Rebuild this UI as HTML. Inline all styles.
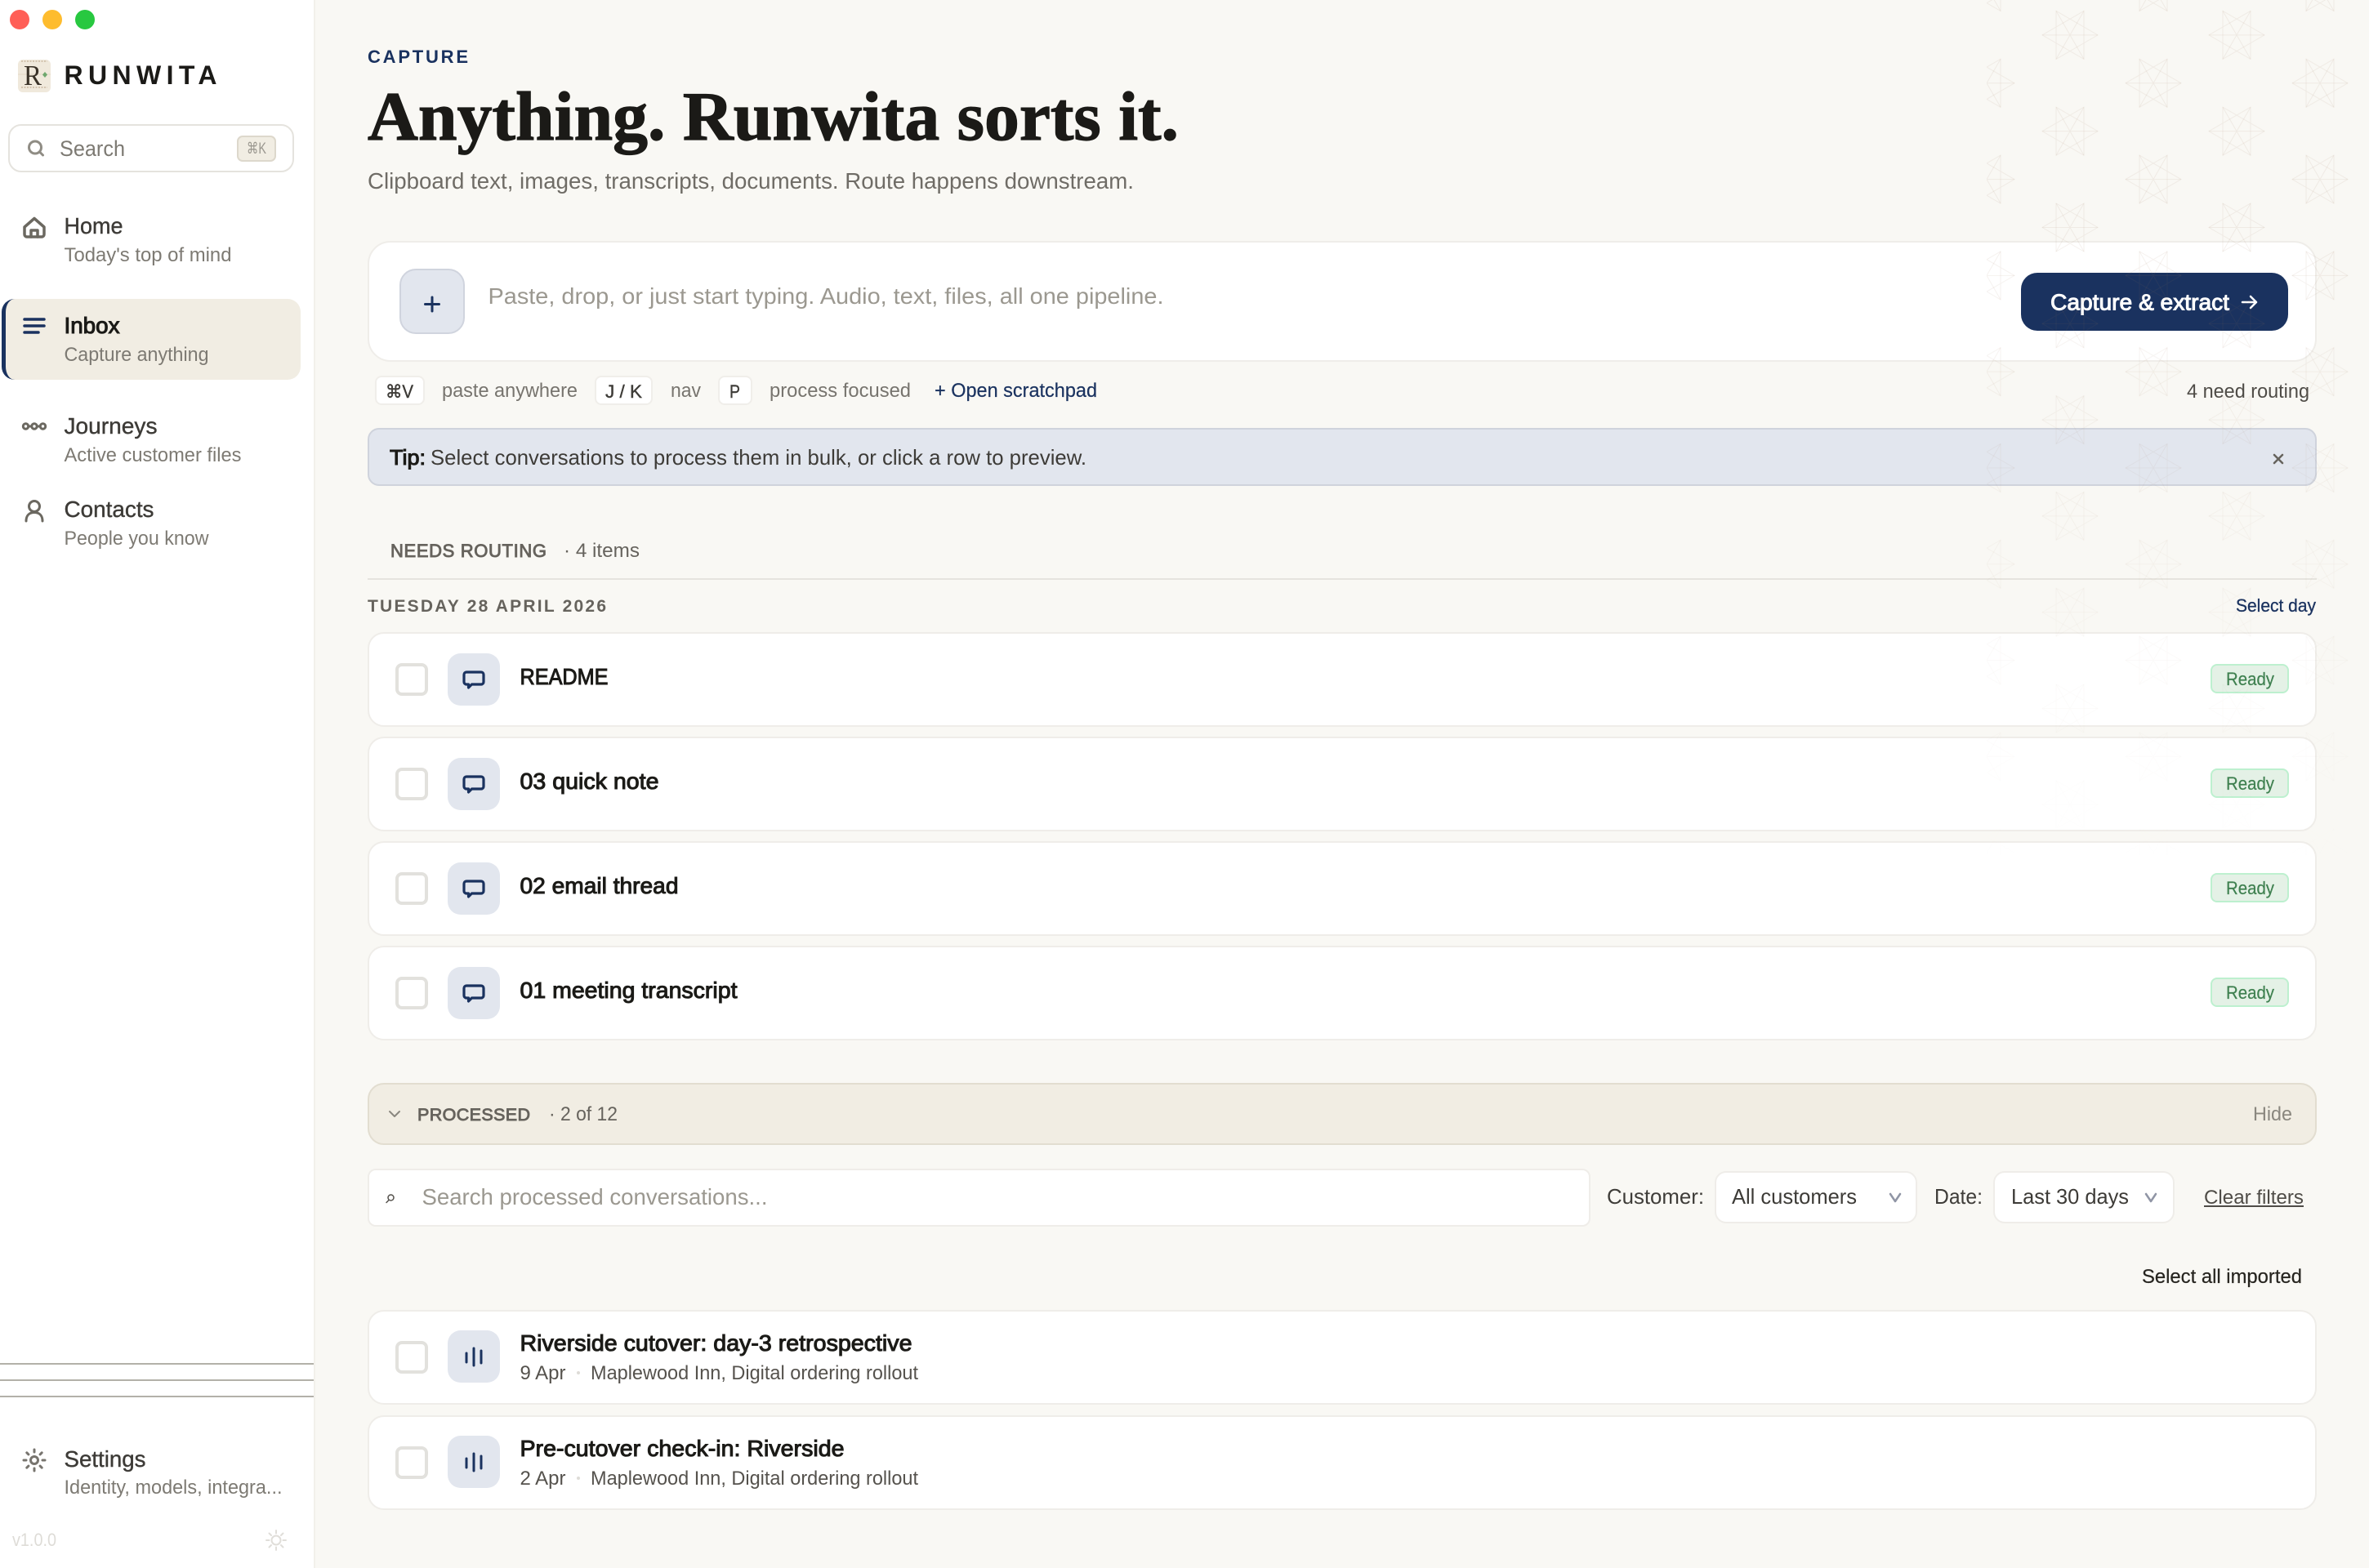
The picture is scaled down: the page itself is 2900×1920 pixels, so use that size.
<!DOCTYPE html>
<html lang="en">
<head>
<meta charset="utf-8">
<title>Runwita</title>
<style>
html,body{margin:0;padding:0;width:2900px;height:1920px;overflow:hidden;background:#f9f8f4}
body{position:relative;font-family:"Liberation Sans",sans-serif}
.b{position:absolute;box-sizing:border-box}
.card{background:#fff;border:2px solid #efede9}
.row{left:450px;width:2386px;height:116px;border-radius:20px}
.cb{left:484px;width:40px;height:40px;border:4px solid #e2e1dd;border-radius:8px;background:#fff}
.ic{left:548px;width:64px;height:64px;border-radius:16px;background:#e2e6ee}
.ready{left:2706px;width:96px;height:36px;background:#e4f1e6;border:2px solid #bdf0cf;border-radius:8px}
.kbd{top:460px;height:36px;background:#fff;border:2px solid #f0eeea;border-radius:8px}
.sel{top:1434px;height:64px;background:#fff;border:2px solid #efede9;border-radius:14px}
.sl{left:0;width:384px;height:2px;background:#b3b1a9}
svg{position:absolute;left:0;top:0}
text{font-family:"Liberation Sans","DejaVu Sans",sans-serif;white-space:pre}
.m{stroke:currentColor;stroke-width:.4}
.sb{font-weight:700}
.t1{fill:#1b1a17;stroke:#1b1a17;stroke-width:1.050}
.cap{fill:#66635d;stroke:#66635d;stroke-width:.9}
.i{fill:none;stroke-linecap:round;stroke-linejoin:round}
</style>
</head>
<body>
<!-- Sidebar -->
<div class="b" style="left:0;top:0;width:386px;height:1920px;background:#fff;border-right:2px solid #f2f0eb"></div>
<div class="b" style="left:12px;top:12px;width:24px;height:24px;border-radius:50%;background:#ff5f57"></div>
<div class="b" style="left:52px;top:12px;width:24px;height:24px;border-radius:50%;background:#febc2e"></div>
<div class="b" style="left:92px;top:12px;width:24px;height:24px;border-radius:50%;background:#28c840"></div>
<div class="b" style="left:22px;top:73px;width:40px;height:40px;border-radius:6px;background:#f0e9dc"></div>
<div class="b" style="left:10px;top:152px;width:350px;height:59px;border-radius:16px;background:#fff;border:2px solid #e5e3de"></div>
<div class="b" style="left:290px;top:166px;width:48px;height:32px;border-radius:7px;background:#f1ede3;border:2px solid #ddd8cc"></div>
<div class="b" style="left:2px;top:366px;width:366px;height:99px;border-radius:16px;background:#f1ede3;border-left:5px solid #1a325f"></div>
<div class="b sl" style="top:1669px"></div>
<div class="b sl" style="top:1689px"></div>
<div class="b sl" style="top:1709px"></div>

<!-- Capture -->
<div class="b card" style="left:450px;top:295px;width:2386px;height:148px;border-radius:28px"></div>
<div class="b" style="left:489px;top:329px;width:80px;height:80px;border-radius:20px;background:#e2e6ee;border:2px solid #d0d4de"></div>
<div class="b" style="left:2474px;top:334px;width:327px;height:71px;border-radius:20px;background:#1a325f"></div>
<div class="b kbd" style="left:459px;width:61px"></div>
<div class="b kbd" style="left:728px;width:71px"></div>
<div class="b kbd" style="left:879px;width:42px"></div>
<div class="b" style="left:450px;top:524px;width:2386px;height:71px;border-radius:14px;background:#e2e6ee;border:2px solid #cfd3dc"></div>
<div class="b" style="left:450px;top:708px;width:2386px;height:2px;background:#e6e4de"></div>

<!-- Rows -->
<div class="b card row" style="top:774px"></div>
<div class="b card row" style="top:902px"></div>
<div class="b card row" style="top:1030px"></div>
<div class="b card row" style="top:1158px"></div>
<div class="b cb" style="top:812px"></div><div class="b cb" style="top:940px"></div><div class="b cb" style="top:1068px"></div><div class="b cb" style="top:1196px"></div>
<div class="b ic" style="top:800px"></div><div class="b ic" style="top:928px"></div><div class="b ic" style="top:1056px"></div><div class="b ic" style="top:1184px"></div>
<div class="b ready" style="top:813px"></div><div class="b ready" style="top:941px"></div><div class="b ready" style="top:1069px"></div><div class="b ready" style="top:1197px"></div>

<!-- Processed -->
<div class="b" style="left:450px;top:1326px;width:2386px;height:76px;border-radius:20px;background:#f1ede3;border:2px solid #e2ddd0"></div>
<div class="b card" style="left:450px;top:1431px;width:1497px;height:71px;border-radius:10px"></div>
<div class="b sel" style="left:2099px;width:248px"></div>
<div class="b sel" style="left:2440px;width:222px"></div>
<div class="b card row" style="top:1604px"></div>
<div class="b card row" style="top:1733px"></div>
<div class="b cb" style="top:1642px"></div><div class="b cb" style="top:1771px"></div>
<div class="b ic" style="top:1629px"></div><div class="b ic" style="top:1758px"></div>

<svg width="2900" height="1920" viewBox="0 0 2900 1920">
  <defs>
    <g id="chat"><path class="i" stroke="#1a325f" stroke-width="3.200" d="M571 0h18a3 3 0 0 1 3 3v9a3 3 0 0 1-3 3h-11.500l-4 4v-4h-2.500a3 3 0 0 1-3-3v-9a3 3 0 0 1 3-3z"/></g>
    <g id="bars" class="i" stroke="#1a325f" stroke-width="3"><path d="M571 6v11M580 0v21M589 3v15"/></g>
  </defs>

  <!-- Logo -->
  <path d="M26 75h32M26 107h32" stroke="#c9b8a0" stroke-width="1.500" stroke-dasharray="2 1.500"/>
  <path d="M22 91h40" stroke="#e4d9c6" stroke-width="1"/>
  <text x="29" y="104" font-size="35" textLength="22" lengthAdjust="spacingAndGlyphs" fill="#3a3228" style="font-family:'Liberation Serif',serif">R</text>
  <path d="M55 88l3 3.500-3 3.500-3-3.500z" fill="#6fa86f"/>
  <text x="78.500" y="103" font-size="32" class="sb" fill="#1b1a17" textLength="187" lengthAdjust="spacing">RUNWITA</text>

  <!-- Search -->
  <circle class="i" cx="43" cy="180.500" r="7.500" stroke="#8f8c84" stroke-width="3"/><path class="i" d="M48.500 186L52.500 190" stroke="#8f8c84" stroke-width="3"/>
  <text x="73" y="191" font-size="27" fill="#7d7a73" textLength="80" lengthAdjust="spacingAndGlyphs">Search</text>
  <text x="302" y="188" font-size="19" fill="#9a978f" textLength="24" lengthAdjust="spacingAndGlyphs">⌘K</text>

  <!-- Nav icons -->
  <g class="i" stroke="#6b6860" stroke-width="3.500">
    <path d="M30 278L42 267.500L54 278V287a3 3 0 0 1-3 3H33a3 3 0 0 1-3-3Z"/><path d="M38 290V282H46V290"/>
    <path d="M30 391H54M30 399H54M30 407H47" stroke="#1a325f"/>
    <g stroke-width="3"><circle cx="31.500" cy="522" r="3.200"/><circle cx="42" cy="522" r="3.200"/><circle cx="52.500" cy="522" r="3.200"/><path d="M35 522h3.500M45.500 522h3.500"/></g>
    <circle cx="42" cy="620" r="6.500" stroke-width="3"/><path stroke-width="3" d="M32 638c0-7 4-10.500 10-10.500s10 3.500 10 10.500"/>
    <circle cx="42" cy="1788" r="4.500" stroke-width="3" stroke="#77746e"/>
    <path stroke="#77746e" stroke-width="3" d="M42 1775v3M42 1798v3M29 1788h3M52 1788h3M32.800 1778.800l2.100 2.100M49.100 1795.100l2.100 2.100M51.200 1778.800l-2.100 2.100M34.900 1795.100l-2.100 2.100"/>
  </g>
  <g class="i" stroke="#e0ded9" stroke-width="2">
    <circle cx="338" cy="1886" r="5.500"/>
    <path d="M338 1874v3.500M338 1894.500v3.500M326 1886h3.500M346.500 1886h3.500M329.500 1877.500l2.500 2.500M344 1892l2.500 2.500M346.500 1877.500l-2.500 2.500M332 1892l-2.500 2.500"/>
  </g>

  <!-- Nav text -->
  <text x="78.500" y="286" font-size="28" class="m" color="#3d3b37" fill="#3d3b37" textLength="72" lengthAdjust="spacingAndGlyphs">Home</text>
  <text x="78.500" y="320" font-size="24" fill="#7d7a73" textLength="205" lengthAdjust="spacingAndGlyphs">Today's top of mind</text>
  <text x="78.500" y="408" font-size="28" class="t1" textLength="68" lengthAdjust="spacingAndGlyphs">Inbox</text>
  <text x="78.500" y="442" font-size="24" fill="#7d7a73" textLength="177" lengthAdjust="spacingAndGlyphs">Capture anything</text>
  <text x="78.500" y="531" font-size="28" class="m" color="#3d3b37" fill="#3d3b37" textLength="114" lengthAdjust="spacingAndGlyphs">Journeys</text>
  <text x="78.500" y="565" font-size="24" fill="#7d7a73" textLength="217" lengthAdjust="spacingAndGlyphs">Active customer files</text>
  <text x="78.500" y="633" font-size="28" class="m" color="#3d3b37" fill="#3d3b37" textLength="110" lengthAdjust="spacingAndGlyphs">Contacts</text>
  <text x="78.500" y="667" font-size="24" fill="#7d7a73" textLength="177" lengthAdjust="spacingAndGlyphs">People you know</text>
  <text x="78.500" y="1796" font-size="28" class="m" color="#3d3b37" fill="#3d3b37" textLength="100" lengthAdjust="spacingAndGlyphs">Settings</text>
  <text x="78.500" y="1829" font-size="24" fill="#7d7a73" textLength="267" lengthAdjust="spacingAndGlyphs">Identity, models, integra...</text>
  <text x="15" y="1893" font-size="22" fill="#dedcd7" textLength="54" lengthAdjust="spacingAndGlyphs">v1.0.0</text>

  <!-- Header -->
  <text x="450" y="77" font-size="22" class="sb" fill="#1a325f" textLength="123" lengthAdjust="spacing">CAPTURE</text>
  <text x="450" y="171" font-size="85" font-weight="700" fill="#1b1a17" stroke="#1b1a17" stroke-width="1.200" textLength="993" lengthAdjust="spacingAndGlyphs" style="font-family:'Liberation Serif',serif">Anything. Runwita sorts it.</text>
  <text x="450" y="231" font-size="28" fill="#6f6c66" textLength="938" lengthAdjust="spacingAndGlyphs">Clipboard text, images, transcripts, documents. Route happens downstream.</text>

  <!-- Capture card -->
  <path d="M529 364v17M520.500 372.500h17" stroke="#1a325f" stroke-width="3" stroke-linecap="round"/>
  <text x="597.500" y="372" font-size="28" fill="#9b9890" textLength="827" lengthAdjust="spacingAndGlyphs">Paste, drop, or just start typing. Audio, text, files, all one pipeline.</text>
  <text x="2510" y="379.500" font-size="28" fill="#fff" stroke="#fff" stroke-width="1" textLength="219" lengthAdjust="spacingAndGlyphs">Capture &amp; extract</text>
  <path class="i" d="M2745 370H2762M2755 363L2762 370L2755 377" stroke="#fff" stroke-width="2.500"/>

  <!-- Hints -->
  <text x="472" y="487" font-size="22" class="m" color="#3d3b37" fill="#3d3b37" textLength="34" lengthAdjust="spacingAndGlyphs">⌘V</text>
  <text x="541" y="486" font-size="24" fill="#77746e" textLength="166" lengthAdjust="spacingAndGlyphs">paste anywhere</text>
  <text x="741" y="487" font-size="22" class="m" color="#3d3b37" fill="#3d3b37" textLength="45" lengthAdjust="spacingAndGlyphs">J / K</text>
  <text x="821" y="486" font-size="24" fill="#77746e" textLength="37" lengthAdjust="spacingAndGlyphs">nav</text>
  <text x="893" y="487" font-size="22" class="m" color="#3d3b37" fill="#3d3b37" textLength="13" lengthAdjust="spacingAndGlyphs">P</text>
  <text x="942" y="486" font-size="24" fill="#77746e" textLength="173" lengthAdjust="spacingAndGlyphs">process focused</text>
  <text x="1144" y="486" font-size="24" class="m" style="stroke-width:.2" color="#1a325f" fill="#1a325f" textLength="199" lengthAdjust="spacingAndGlyphs">+ Open scratchpad</text>
  <text x="2677" y="487" font-size="24" fill="#4f4c47" textLength="150" lengthAdjust="spacingAndGlyphs">4 need routing</text>

  <!-- Tip -->
  <text x="477" y="569" font-size="26" class="t1" textLength="44" lengthAdjust="spacingAndGlyphs">Tip:</text>
  <text x="527" y="569" font-size="26" fill="#3d3b37" textLength="803" lengthAdjust="spacingAndGlyphs">Select conversations to process them in bulk, or click a row to preview.</text>
  <path class="i" d="M2784 557L2794 567M2794 557L2784 567" stroke="#66635d" stroke-width="2.500"/>

  <!-- Section headers -->
  <text x="478" y="682" font-size="22" class="cap" textLength="191" lengthAdjust="spacing">NEEDS ROUTING</text>
  <text x="690" y="682" font-size="24" fill="#66635d" textLength="93" lengthAdjust="spacingAndGlyphs">· 4 items</text>
  <text x="450" y="749" font-size="21" class="sb" fill="#66635d" textLength="292" lengthAdjust="spacing">TUESDAY 28 APRIL 2026</text>
  <text x="2737" y="749" font-size="22" class="m" style="stroke-width:.3" color="#1a325f" fill="#1a325f" textLength="98" lengthAdjust="spacingAndGlyphs">Select day</text>

  <!-- Row contents -->
  <use href="#chat" transform="translate(0,823)"/><use href="#chat" transform="translate(0,951)"/><use href="#chat" transform="translate(0,1079)"/><use href="#chat" transform="translate(0,1207)"/>
  <text x="636.500" y="838" font-size="28" class="t1" textLength="108" lengthAdjust="spacingAndGlyphs">README</text>
  <text x="636.500" y="966" font-size="28" class="t1" textLength="170" lengthAdjust="spacingAndGlyphs">03 quick note</text>
  <text x="636.500" y="1094" font-size="28" class="t1" textLength="194" lengthAdjust="spacingAndGlyphs">02 email thread</text>
  <text x="636.500" y="1222" font-size="28" class="t1" textLength="266" lengthAdjust="spacingAndGlyphs">01 meeting transcript</text>
  <text x="2725" y="839" font-size="22" class="m" style="stroke-width:.2" color="#3f8050" fill="#3f8050" textLength="59" lengthAdjust="spacingAndGlyphs">Ready</text>
  <text x="2725" y="967" font-size="22" class="m" style="stroke-width:.2" color="#3f8050" fill="#3f8050" textLength="59" lengthAdjust="spacingAndGlyphs">Ready</text>
  <text x="2725" y="1095" font-size="22" class="m" style="stroke-width:.2" color="#3f8050" fill="#3f8050" textLength="59" lengthAdjust="spacingAndGlyphs">Ready</text>
  <text x="2725" y="1223" font-size="22" class="m" style="stroke-width:.2" color="#3f8050" fill="#3f8050" textLength="59" lengthAdjust="spacingAndGlyphs">Ready</text>

  <!-- Processed header -->
  <path class="i" d="M477 1361L483 1367L489 1361" stroke="#8a877f" stroke-width="2"/>
  <text x="511" y="1372" font-size="21.500" class="cap" textLength="138" lengthAdjust="spacing">PROCESSED</text>
  <text x="672" y="1372" font-size="24" fill="#66635d" textLength="84" lengthAdjust="spacingAndGlyphs">· 2 of 12</text>
  <text x="2758" y="1372" font-size="24" fill="#8a877f" textLength="48" lengthAdjust="spacingAndGlyphs">Hide</text>

  <!-- Filters -->
  <circle class="i" cx="478.500" cy="1466.500" r="3.500" stroke="#55524d" stroke-width="1.500"/><path class="i" d="M476 1469.500L473 1472.500" stroke="#55524d" stroke-width="1.500"/>
  <text x="516.500" y="1475" font-size="28" fill="#9b9890" textLength="423" lengthAdjust="spacingAndGlyphs">Search processed conversations...</text>
  <text x="1967" y="1474" font-size="26" fill="#3f3d39" textLength="119" lengthAdjust="spacingAndGlyphs">Customer:</text>
  <text x="2120" y="1474" font-size="26" fill="#3d3b37" textLength="153" lengthAdjust="spacingAndGlyphs">All customers</text>
  <path class="i" d="M2314 1462L2320 1471L2326 1462" stroke="#9095a5" stroke-width="2.500"/>
  <text x="2368" y="1474" font-size="26" fill="#3f3d39" textLength="59" lengthAdjust="spacingAndGlyphs">Date:</text>
  <text x="2462" y="1474" font-size="26" fill="#3d3b37" textLength="144" lengthAdjust="spacingAndGlyphs">Last 30 days</text>
  <path class="i" d="M2627 1462L2633 1471L2639 1462" stroke="#9095a5" stroke-width="2.500"/>
  <text x="2698" y="1474" font-size="24" fill="#4f4c47" textLength="122" lengthAdjust="spacingAndGlyphs">Clear filters</text>
  <rect x="2698" y="1476" width="122" height="2" fill="#4f4c47"/>
  <text x="2622" y="1571" font-size="24" class="m" style="stroke-width:.2" color="#26241f" fill="#26241f" textLength="196" lengthAdjust="spacingAndGlyphs">Select all imported</text>

  <!-- Processed rows -->
  <use href="#bars" transform="translate(0,1651)"/><use href="#bars" transform="translate(0,1780)"/>
  <text x="636.500" y="1654" font-size="28" class="t1" textLength="480" lengthAdjust="spacingAndGlyphs">Riverside cutover: day-3 retrospective</text>
  <text x="636.500" y="1689" font-size="24" fill="#55524d" textLength="56" lengthAdjust="spacingAndGlyphs">9 Apr</text>
  <circle cx="708" cy="1681" r="2" fill="#dedcd7"/>
  <text x="723" y="1689" font-size="24" fill="#55524d" textLength="401" lengthAdjust="spacingAndGlyphs">Maplewood Inn, Digital ordering rollout</text>
  <text x="636.500" y="1783" font-size="28" class="t1" textLength="397" lengthAdjust="spacingAndGlyphs">Pre-cutover check-in: Riverside</text>
  <text x="636.500" y="1818" font-size="24" fill="#55524d" textLength="56" lengthAdjust="spacingAndGlyphs">2 Apr</text>
  <circle cx="708" cy="1810" r="2" fill="#dedcd7"/>
  <text x="723" y="1818" font-size="24" fill="#55524d" textLength="401" lengthAdjust="spacingAndGlyphs">Maplewood Inn, Digital ordering rollout</text>
</svg>

<!-- Decorative star pattern overlay -->
<svg width="468" height="1060" viewBox="0 0 468 1060" style="left:2432px;top:0;pointer-events:none;-webkit-mask-image:linear-gradient(to bottom,#000 30%,transparent 100%);mask-image:linear-gradient(to bottom,#000 30%,transparent 100%)">
  <defs>
    <g id="star" fill="none" stroke="#a07a5a" stroke-opacity=".1" stroke-width="1">
      <path d="M34 0L-17 29.500L-17 -29.500ZM-34 0L17 29.500L17 -29.500Z"/>
      <path d="M-34 0H34M-17 -29.500L17 29.500M17 -29.500L-17 29.500"/>
    </g>
    <pattern id="tile" x="0" y="-16" width="204" height="117.800" patternUnits="userSpaceOnUse">
      <use href="#star" x="0" y="0"/><use href="#star" x="204" y="0"/>
      <use href="#star" x="0" y="117.800"/><use href="#star" x="204" y="117.800"/>
      <use href="#star" x="102" y="58.900"/>
    </pattern>
  </defs>
  <rect width="468" height="1060" fill="url(#tile)"/>
</svg>
</body>
</html>
